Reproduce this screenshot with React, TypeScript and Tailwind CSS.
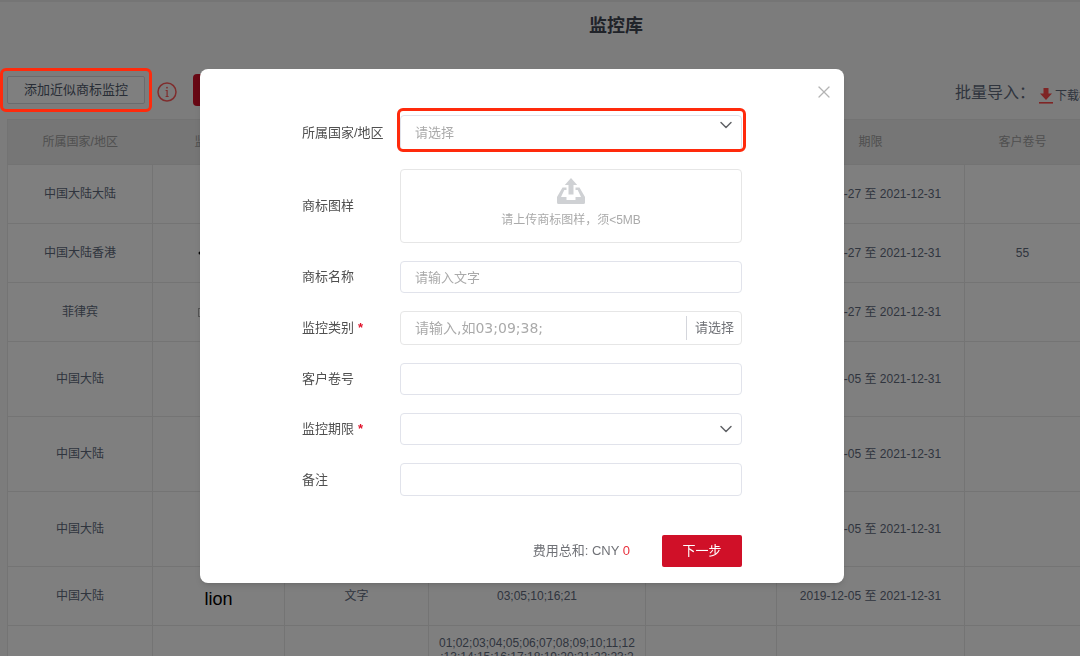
import { useState } from 'react';
import type { ReactNode } from 'react';
import { ChevronDown, X } from 'lucide-react';

interface MonitorRow {
    region: string;
    mark?: ReactNode;
    type?: string;
    classes?: string;
    period?: string;
    docket?: string;
    height: string;
}

const rows: MonitorRow[] = [
    {
        region: '中国大陆大陆',
        period: '2019-12-27 至 2021-12-31',
        height: 'h-[59px]',
    },
    {
        region: '中国大陆香港',
        mark: <DotMark />,
        period: '2019-12-27 至 2021-12-31',
        docket: '55',
        height: 'h-[59px]',
    },
    {
        region: '菲律宾',
        mark: <BoxMark />,
        period: '2019-12-27 至 2021-12-31',
        height: 'h-[59px]',
    },
    {
        region: '中国大陆',
        period: '2019-12-05 至 2021-12-31',
        height: 'h-[75px]',
    },
    {
        region: '中国大陆',
        period: '2019-12-05 至 2021-12-31',
        height: 'h-[75px]',
    },
    {
        region: '中国大陆',
        period: '2019-12-05 至 2021-12-31',
        height: 'h-[75px]',
    },
    {
        region: '中国大陆',
        mark: <span className="block pt-1.5">lion</span>,
        type: '文字',
        classes: '03;05;10;16;21',
        period: '2019-12-05 至 2021-12-31',
        height: 'h-[59px]',
    },
    {
        region: '',
        classes:
            '01;02;03;04;05;06;07;08;09;10;11;12\n;13;14;15;16;17;18;19;20;21;22;23;2\n4;25;26;27;28;29;30;31;32;33;34;35;\n36;37;38;39;40;41;42;43;44;45',
        height: 'h-[75px]',
    },
];

const headers = [
    '所属国家/地区',
    '监控商标',
    '类型',
    '监控类别',
    '状态',
    '期限',
    '客户卷号',
    '操作',
];

function DotMark() {
    return (
        <svg width="42" height="20" viewBox="0 0 42 20" className="mx-auto">
            <circle cx="2" cy="10" r="1.5" fill="#111" />
            <path d="M3 13v6h36V3" fill="none" stroke="#999" />
        </svg>
    );
}

function BoxMark() {
    return (
        <svg width="42" height="12" viewBox="0 0 42 12" className="mx-auto">
            <rect x="0.5" y="2.5" width="40" height="8" fill="none" stroke="#aaa" />
        </svg>
    );
}

function InfoIcon() {
    return (
        <svg width="20" height="20" viewBox="0 0 20 20" fill="none" stroke="#ff5a5a">
            <circle cx="10" cy="10" r="9" strokeWidth="1.5" />
            <path d="M8.6 8.5h1.5V14.5M8.6 14.5h3" strokeWidth="1.2" />
            <circle cx="10" cy="5.7" r="0.9" fill="#ff5a5a" stroke="none" />
        </svg>
    );
}

function DownloadIcon() {
    return (
        <svg width="14" height="16" viewBox="0 0 14 16" fill="#ff4a4a">
            <path d="M4.5 0h5v5.5H13L7 12 1 5.5h3.5z" />
            <path d="M0 14h14v1.6H0z" />
        </svg>
    );
}

function UploadIcon() {
    return (
        <svg width="28" height="26" viewBox="0 0 28 26" fill="#cfd1d4">
            <path d="M14 0l6.2 7H16.5v9.5h-5V7H7.8z" />
            <path d="M5.5 9.5h4v2.5H7.3L4 19h5.5v3h9v-3H24l-3.3-7h-2.2V9.500h4L28 19v5.500a1.500 1.500 0 0 1-1.500 1.500h-25A1.500 1.500 0 0 1 0 24.500V19z" />
        </svg>
    );
}

function MonitorTable() {
    return (
        <table className="mt-[13px] w-full table-fixed border-collapse bg-white text-center text-xs text-[#606a7c]">
            <colgroup>
                <col className="w-[145px]" />
                <col className="w-[132px]" />
                <col className="w-[144px]" />
                <col className="w-[217px]" />
                <col className="w-[131px]" />
                <col className="w-[188px]" />
                <col className="w-[116px]" />
                <col />
            </colgroup>
            <thead>
                <tr className="h-[45px] bg-[#ececec] text-[#a0a0a0]">
                    {headers.map((title) => (
                        <th key={title} className="border-y border-[#e6e6e6] font-normal first:border-l">
                            {title}
                        </th>
                    ))}
                </tr>
            </thead>
            <tbody>
                {rows.map((row, i) => (
                    <tr key={i} className={row.height}>
                        <td className="border border-[#e9e9e9]">{row.region}</td>
                        <td className="border border-[#e9e9e9] text-lg text-black">{row.mark}</td>
                        <td className="border border-[#e9e9e9]">{row.type}</td>
                        <td className="border border-[#e9e9e9] px-2 py-2.5 leading-[14px] whitespace-pre-line">
                            {row.classes}
                        </td>
                        <td className="border border-[#e9e9e9]"></td>
                        <td className="border border-[#e9e9e9]">{row.period}</td>
                        <td className="border border-[#e9e9e9]">{row.docket}</td>
                        <td className="border border-[#e9e9e9]"></td>
                    </tr>
                ))}
            </tbody>
        </table>
    );
}

function Toolbar() {
    return (
        <div className="mt-[34px] flex h-8 items-center">
            <div className="relative">
                <button className="h-7 w-[138px] rounded-xs border border-[#d5d7dc] bg-white text-[13px] text-[#505a6c]">
                    添加近似商标监控
                </button>
                <span className="pointer-events-none absolute -inset-x-[7px] -inset-y-2 z-20 rounded-md border-3 border-[#ff2a0c]"></span>
            </div>
            <button aria-label="说明" className="mt-1 ml-3">
                <InfoIcon />
            </button>
            <button className="ml-4 h-8 w-[120px] rounded-sm bg-[#d01028] text-[13px] text-white">
                批量监控
            </button>
            <div className="mt-1.5 ml-auto flex w-[270px] items-center text-[#606a7c]">
                <span className="text-base">批量导入：</span>
                <a href="#template" className="ml-1 flex items-center gap-0.5 pt-1.5 text-xs">
                    <DownloadIcon />
                    下载模板
                </a>
            </div>
        </div>
    );
}

const fieldClass =
    'w-full rounded-sm border border-[#e1e3eb] bg-white px-3.5 text-[13px] outline-none placeholder:text-[#aaaaaa]';

function FieldLabel({ id, text, required }: { id: string; text: string; required?: boolean }) {
    return (
        <label htmlFor={id} className="text-[13px] text-[#505050]">
            {text}
            {required && <span className="ml-1 font-bold text-[#e0142c]">*</span>}
        </label>
    );
}

function MonitorDialog({ onClose }: { onClose: () => void }) {
    return (
        <div
            role="dialog"
            aria-label="添加近似商标监控"
            className="relative w-[644px] rounded-lg bg-white px-[102px] pt-[46px] pb-4 shadow-md"
        >
            <button
                aria-label="关闭"
                onClick={onClose}
                className="absolute top-[13px] right-2.5 text-[#b4b4b4]"
            >
                <X size={20} strokeWidth={1.5} />
            </button>
            <form>
                <div className="grid grid-cols-[98px_1fr] items-center gap-y-[18px]">
                    <FieldLabel id="region" text="所属国家/地区" />
                    <div className="relative">
                        <select id="region" className={`${fieldClass} h-9 appearance-none text-[#aaaaaa]`}>
                            <option>请选择</option>
                        </select>
                        <ChevronDown
                            size={20}
                            strokeWidth={1.75}
                            className="pointer-events-none absolute top-0 right-1.5 text-[#606266]"
                        />
                        <span className="pointer-events-none absolute -top-[7px] -right-1 -bottom-px -left-[3px] rounded-md border-3 border-[#ff2a0c]"></span>
                    </div>

                    <FieldLabel id="image" text="商标图样" />
                    <label
                        htmlFor="image"
                        className="flex h-[74px] cursor-pointer flex-col items-center rounded-sm border border-[#e6e6e6] pt-2 text-xs text-[#aaaaaa]"
                    >
                        <UploadIcon />
                        <span className="mt-2">请上传商标图样，须&lt;5MB</span>
                        <input id="image" type="file" className="hidden" />
                    </label>

                    <FieldLabel id="name" text="商标名称" />
                    <input
                        id="name"
                        type="text"
                        placeholder="请输入文字"
                        className={`${fieldClass} h-8 text-[#606266]`}
                    />

                    <FieldLabel id="classes" text="监控类别" required />
                    <div className="flex h-[34px] items-center rounded-sm border border-[#e6e6e6]">
                        <input
                            id="classes"
                            type="text"
                            placeholder="请输入,如03;09;38;"
                            className="min-w-0 flex-1 px-3.5 font-['DejaVu_Sans','Noto_Sans_CJK_SC',sans-serif] text-sm outline-none placeholder:text-[#aaaaaa]"
                        />
                        <button
                            type="button"
                            className="h-6 border-l border-[#d4d6dc] pr-[7px] pl-2 text-[13px] text-[#707277]"
                        >
                            请选择
                        </button>
                    </div>

                    <FieldLabel id="docket" text="客户卷号" />
                    <input id="docket" type="text" className={`${fieldClass} h-8 text-[#606266]`} />

                    <FieldLabel id="period" text="监控期限" required />
                    <div className="relative">
                        <select id="period" className={`${fieldClass} h-8 appearance-none text-[#606266]`}>
                            <option></option>
                        </select>
                        <ChevronDown
                            size={20}
                            strokeWidth={1.75}
                            className="pointer-events-none absolute top-1.5 right-1.5 text-[#606266]"
                        />
                    </div>

                    <FieldLabel id="remark" text="备注" />
                    <input id="remark" type="text" className={`${fieldClass} h-[33px] text-[#606266]`} />
                </div>

                <div className="mt-[39px] flex items-center justify-end gap-8">
                    <p className="text-[13px] text-[#707277]">
                        费用总和: CNY <span className="text-[#e8303c]">0</span>
                    </p>
                    <button type="button" className="h-8 w-20 rounded-xs bg-[#d01028] text-[13px] text-white">
                        下一步
                    </button>
                </div>
            </form>
        </div>
    );
}

function App() {
    const [showDialog, setShowDialog] = useState(true);

    return (
        <div className="h-screen overflow-hidden bg-[#f8f8f8] font-['Liberation_Sans','Noto_Sans_CJK_SC',sans-serif]">
            <div className="min-w-[1232px] border-t-2 border-[#ebebeb] px-[7px]">
                <h1 className="pt-2.5 text-center text-lg font-bold text-[#404652]">监控库</h1>
                <Toolbar />
                <MonitorTable />
            </div>
            {showDialog && (
                <div className="fixed inset-0 z-10 bg-black/50"></div>
            )}
            {showDialog && (
                <div className="fixed inset-0 z-30 flex items-start justify-center pt-[69px] pr-9">
                    <MonitorDialog onClose={() => setShowDialog(false)} />
                </div>
            )}
        </div>
    );
}

export default App;
